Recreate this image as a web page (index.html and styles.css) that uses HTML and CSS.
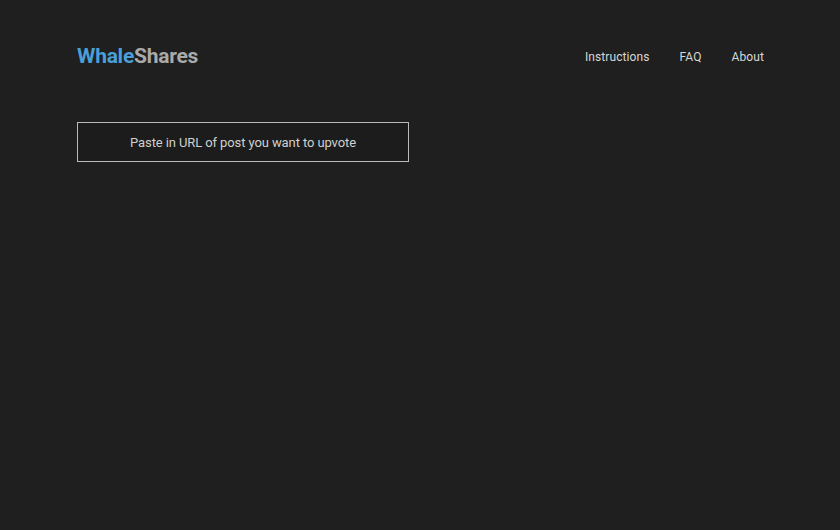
FILE: index.html
```html
<!DOCTYPE html>
<html lang="en">
<head>
  <meta charset="UTF-8">
  <title>WhaleShares</title>
  <link rel="stylesheet" href="styles.css">
</head>
<body>
  <div class="container">
    <header class="header">
      <div class="logo"><span class="logo-whale">Whale</span><span class="logo-shares">Shares</span></div>
      <nav class="nav">
        <a href="#">Instructions</a>
        <a href="#">FAQ</a>
        <a href="#">About</a>
      </nav>
    </header>
    <div class="url-form">
      <input type="text" class="url-input" placeholder="Paste in URL of post you want to upvote">
    </div>
  </div>
</body>
</html>
```

FILE: styles.css
```css
:root{
  --bg: #1e1f1e;
  --blue: #4a9fd8;
  --grey: #a9aaa9;
  --light: #d6d7d6;
}
* {
  font-family: Roboto, "Liberation Sans", sans-serif;
  box-sizing: border-box;
}
body{
  margin: 0;
  background-color: var(--bg);
  min-height: 100vh;
}
.container{
  padding: 0 76px 0 77px;
}
.header{
  display: flex;
  justify-content: space-between;
  align-items: center;
  height: 112px;
  padding-bottom: 1px;
}
.logo{
  font-size: 21px;
  font-weight: bold;
  letter-spacing: -0.25px;
}
.logo-whale{
  color: var(--blue);
}
.logo-shares{
  color: var(--grey);
}
.nav{
  display: flex;
  gap: 30px;
  padding-top: 2px;
}
.nav a{
  color: var(--light);
  text-decoration: none;
  font-size: 12px;
  letter-spacing: 0.1px;
}
.url-form{
  margin-top: 10px;
}
.url-input{
  width: 332px;
  height: 40px;
  background-color: #1b1c1b;
  border: 1px solid #b9bab9;
  color: var(--light);
  font-size: 13px;
  letter-spacing: -0.1px;
  text-align: center;
  outline: none;
}
.url-input::placeholder{
  color: #cfd0cf;
}
```
